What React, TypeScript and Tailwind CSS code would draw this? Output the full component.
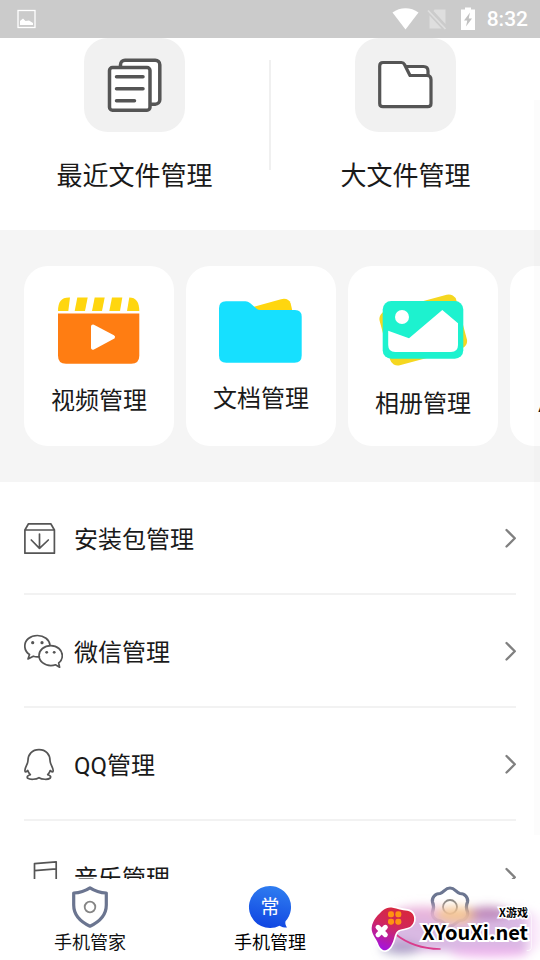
import React, { useState } from 'react';
import { clsx } from 'clsx';

interface IconItem {
  id: string;
  label: string;
  icon: React.ReactNode;
}

const RecentIcon = () => (
  <svg className="w-[55px] h-[54px]" viewBox="0 0 55 54" fill="#fff" stroke="#555" strokeWidth="3.5" strokeLinecap="round" strokeLinejoin="round">
    <rect x="13.5" y="2.2" width="39.3" height="44" rx="4.5" />
    <rect x="2.5" y="9.6" width="40.5" height="42.6" rx="3" />
    <path d="M9.5 18.7H36M9.5 30.7H36M9.5 42.7H27.5" />
  </svg>
);

const BigFileIcon = () => (
  <svg className="w-[55px] h-[54px]" viewBox="0 0 55 54" fill="#fff" stroke="#555" strokeWidth="3.2" strokeLinecap="round" strokeLinejoin="round">
    <path d="M27 8.5H45.5Q50 8.5 50 13V18H31Z" />
    <path d="M5 4.5H23.5Q25.5 4.5 26.5 6.5L32 17.5H49Q53 17.5 53 21.5V45.5Q53 48.7 49.8 48.7H5Q1.7 48.7 1.7 45.5V8Q1.7 4.5 5 4.5Z" />
  </svg>
);

const VideoIcon = () => (
  <svg className="w-24 h-[72px] shrink-0" viewBox="0 0 96 72">
    <g fill="#ffd60f">
      <path d="M7 17C7 8 10 3.4 18 3.4H19L17.3 17Z" />
      <path d="M26.3 3.4H36.7L34 17H23.7Z" />
      <path d="M43.7 3.4H53.7L51 17H41Z" />
      <path d="M61 3.4H71.3L69 17H58.3Z" />
      <path d="M78.3 3.4C85 3.4 88.3 8 88.3 17H76Z" />
    </g>
    <path fill="#ff7d12" d="M7 19.5H88.3V61.7Q88.3 69.7 80.3 69.7H15Q7 69.7 7 61.7Z" />
    <path fill="#fff" stroke="#fff" strokeWidth="4" strokeLinejoin="round" d="M42 32.5L62 43L42 53.7Z" />
  </svg>
);

const DocIcon = () => (
  <svg className="w-24 h-[70px] shrink-0" viewBox="0 0 96 70">
    <path fill="#ffd60f" d="M40 13L68 5.2Q75.5 3.6 77.7 9.5L79.8 19H44Z" />
    <path fill="#16e0ff" d="M13 7.3H32.5Q35 7.3 37 9L44 15Q45.3 16 47 16H82Q88.7 16 88.7 22.7V61.5Q88.7 68.7 81.5 68.7H13.2Q6 68.7 6 61.5V14.3Q6 7.3 13 7.3Z" />
  </svg>
);

const AlbumIcon = () => (
  <svg className="w-24 h-[75px] shrink-0" viewBox="0 0 96 75">
    <rect x="8.5" y="8" width="79.5" height="56" rx="8" fill="#f5d720" transform="rotate(-15 48.2 36)" />
    <rect x="7.7" y="7" width="80.6" height="57.7" rx="8.5" fill="#1df2cf" />
    <path fill="#fff" d="M13.2 36.7L34 44.3L67.3 16L83 29.3V51Q83 58 76 58H20.2Q13.2 58 13.2 51Z" />
    <circle cx="27" cy="23" r="7" fill="#fff" />
  </svg>
);

const lineIcon = {
  className: 'w-[39px] h-[39px] shrink-0',
  viewBox: '0 0 39 39',
  fill: 'none',
  stroke: '#555',
  strokeWidth: 1.7,
  strokeLinecap: 'round' as const,
  strokeLinejoin: 'round' as const,
};

const PackageIcon = () => (
  <svg {...lineIcon}>
    <path d="M0.9 12V35.2H30.4V12ZM0.9 12L4.5 5.8H26.8L30.4 12" />
    <path d="M15.5 16V30.3M7.3 22L15.5 30.3L24.3 22" />
  </svg>
);

const WechatIcon = () => (
  <svg {...lineIcon}>
    <path d="M26 14.3C25.5 8.5 20 4.5 13.4 4.5C6.3 4.5 0.8 9 0.8 15C0.8 18.8 2.5 21.5 5.5 23.5L4 28L9.3 25.2C11 25.7 13 26 15.4 25.6" />
    <path d="M26.8 14.6C20.3 14.6 15 19 15 24.5C15 30.2 20.3 34.6 26.8 34.6C28.5 34.6 30.2 34.3 31.5 33.8L35.6 36.2L34.7 32C37 30.2 38.3 27.5 38.3 24.5C38.3 19 33.2 14.6 26.8 14.6Z" />
    <g fill="#555" stroke="none">
      <circle cx="8.7" cy="11.7" r="1.6" />
      <circle cx="18" cy="11.7" r="1.6" />
      <circle cx="22.7" cy="21.3" r="1.4" />
      <circle cx="30.2" cy="21.3" r="1.4" />
    </g>
  </svg>
);

const QQIcon = () => (
  <svg {...lineIcon}>
    <path d="M15 5.7C8 5.7 3.9 10.5 3.9 17C3.9 20 1 23 0.9 26.5C0.9 28.5 1.5 28.5 3.8 26.5C4.3 28.5 5 29.5 6.3 30.7C3.5 31.5 2.5 33 3.8 34.3C6 35.8 12 35.6 15 33.7C18 35.6 24 35.8 26 34.3C27.3 33 26.5 31.5 23.7 30.7C25 29.5 25.7 28.5 26.2 26.5C28.5 28.5 29.2 28.5 29.2 26.5C29 23 26.1 20 26.1 17C26.1 10.5 22 5.7 15 5.7Z" />
  </svg>
);

const MusicIcon = () => (
  <svg {...lineIcon}>
    <path d="M10.5 31V6.6L32.2 4.8V28M10.5 13.7L32.2 11.9" />
    <circle cx="6.5" cy="31" r="4" />
    <circle cx="28.2" cy="28" r="4" />
  </svg>
);

const ChevronIcon = () => (
  <svg className="w-3 h-5 shrink-0" viewBox="0 0 12 20" fill="none" stroke="#808080" strokeWidth="2.3" strokeLinecap="round" strokeLinejoin="round">
    <path d="M2.5 2L10.8 10.3L2.5 18.5" />
  </svg>
);

const ShieldIcon = () => (
  <svg className="w-11 h-11" viewBox="0 0 44 44" fill="none" stroke="#6b7590" strokeWidth="3.2" strokeLinejoin="round">
    <path d="M22 2.8C17 6 12 7.6 5.7 8V20C5.7 30 13 37 22 41.2C31 37 38.3 30 38.3 20V8C32 7.6 27 6 22 2.8Z" />
    <circle cx="22" cy="22" r="5.3" stroke="#858585" strokeWidth="1.8" />
  </svg>
);

const BubbleIcon = () => (
  <svg className="w-11 h-11" viewBox="0 0 44 44">
    <defs>
      <linearGradient id="bubble" x1="0.6" y1="0" x2="0.4" y2="1">
        <stop offset="0" stopColor="#2f7df0" />
        <stop offset="1" stopColor="#1045e2" />
      </linearGradient>
    </defs>
    <path fill="url(#bubble)" d="M22 1A21 21 0 0 1 37.5 36.2C37 38.5 37.5 40.5 39 42.5C36 42.5 33.5 42 31.5 40.7A21 21 0 1 1 22 1Z" />
    <text x="22" y="29" textAnchor="middle" fill="#fff" fontSize="19" fontFamily="Noto Sans CJK SC, sans-serif">常</text>
  </svg>
);

const FlowerIcon = () => (
  <svg className="w-11 h-11" viewBox="0 0 44 44" fill="none" stroke="#6b7590" strokeWidth="3.2" strokeLinejoin="round">
    <path d="M22 3C27 3 28 7.5 32 8.5C37 8.5 40.5 13 39.5 17C38 20.5 38 23.5 39.5 27C40.5 31 37 35.5 32 35.5C28 36.5 27 41 22 41C17 41 16 36.5 12 35.5C7 35.5 3.5 31 4.5 27C6 23.5 6 20.5 4.5 17C3.5 13 7 8.5 12 8.5C16 7.5 17 3 22 3Z" />
    <circle cx="22" cy="22" r="7" stroke="#858585" strokeWidth="1.8" />
  </svg>
);

const topItems: IconItem[] = [
  { id: 'recent', label: '最近文件管理', icon: <RecentIcon /> },
  { id: 'big', label: '大文件管理', icon: <BigFileIcon /> },
];

const cards: IconItem[] = [
  { id: 'video', label: '视频管理', icon: <VideoIcon /> },
  { id: 'doc', label: '文档管理', icon: <DocIcon /> },
  { id: 'album', label: '相册管理', icon: <AlbumIcon /> },
  { id: 'app', label: 'APP管理', icon: <span className="h-[75px] shrink-0" /> },
];

const rows: IconItem[] = [
  { id: 'package', label: '安装包管理', icon: <PackageIcon /> },
  { id: 'wechat', label: '微信管理', icon: <WechatIcon /> },
  { id: 'qq', label: 'QQ管理', icon: <QQIcon /> },
  { id: 'music', label: '音乐管理', icon: <MusicIcon /> },
];

const tabs: IconItem[] = [
  { id: 'guard', label: '手机管家', icon: <ShieldIcon /> },
  { id: 'manage', label: '手机管理', icon: <BubbleIcon /> },
  { id: 'settings', label: '', icon: <FlowerIcon /> },
];

const StatusBar: React.FC = () => (
  <header className="flex h-[38px] shrink-0 items-center bg-[#cbcbcb] pl-[17px] pr-3 text-white">
    <svg className="w-[19px] h-5" viewBox="0 0 19 20" fill="none">
      <rect x="1" y="1.5" width="17" height="17" stroke="#fff" strokeWidth="1.3" />
      <path fill="#fff" d="M3 16V12L6 9.5L8.5 12L12 11.5L16 14V16Z" />
    </svg>
    <div className="ml-auto flex items-center">
      <svg className="w-[27px] h-6" viewBox="0 0 27 24" fill="#fff">
        <path d="M0.5 5.500C8 -0.3 19 -0.3 26.5 5.500L13.5 22.500Z" />
      </svg>
      <svg className="ml-2 w-5 h-6" viewBox="0 0 20 24">
        <path fill="#dedede" d="M7.5 2.5H18.5V17L6.5 4ZM2.5 8.500L14.500 21.500H2.500Z" />
        <path stroke="#dedede" strokeWidth="1.8" d="M1 3.500L18.500 22" />
      </svg>
      <svg className="ml-[13px] w-4 h-6" viewBox="0 0 16 24">
        <path fill="#fff" d="M5 0.5H11V2.5H15V23H1V2.5H5Z" />
        <path fill="#c2c2c2" d="M10 5.5L4 13.5H7.3L6 19.5L12 11.5H8.7Z" />
      </svg>
      <span className="pl-[11px] text-[21px] leading-6 font-medium">8:32</span>
    </div>
  </header>
);

const Watermark: React.FC = () => (
  <div className="pointer-events-none absolute right-0 bottom-0 h-[100px] w-[180px] overflow-hidden">
    <svg className="absolute inset-0 h-full w-full" viewBox="0 0 540 300">
      <defs>
        <filter id="haze" x="-30%" y="-60%" width="160%" height="220%">
          <feGaussianBlur stdDeviation="15" />
        </filter>
        <linearGradient id="pad" x1="0.7" y1="0" x2="0.3" y2="1">
          <stop offset="0" stopColor="#d8283c" />
          <stop offset="0.45" stopColor="#d0265c" />
          <stop offset="1" stopColor="#a414e0" />
        </linearGradient>
      </defs>
      <g filter="url(#haze)">
        <rect x="90" y="150" width="420" height="125" rx="30" fill="#cfa8dc" opacity="0.8" />
        <ellipse cx="190" cy="160" rx="90" ry="24" fill="#ecb0d8" opacity="0.7" />
        <ellipse cx="290" cy="165" rx="65" ry="26" fill="#f6c690" opacity="0.9" />
        <ellipse cx="385" cy="158" rx="60" ry="20" fill="#a8609c" opacity="0.6" />
        <ellipse cx="120" cy="265" rx="60" ry="20" fill="#9490b8" opacity="0.6" />
        <ellipse cx="390" cy="278" rx="120" ry="16" fill="#f0a8ec" opacity="0.7" />
        <ellipse cx="520" cy="215" rx="24" ry="60" fill="#fae4fa" opacity="0.9" />
      </g>
      <path d="M470 152H495Q514 152 514 172V262Q514 272 500 272" fill="none" stroke="#fff" strokeWidth="3" opacity="0.7" />
      <path d="M106 222Q160 266 240 267" fill="none" stroke="#d93c8c" strokeWidth="5" strokeLinecap="round" />
      <path
        d="M98 143C112 146 125 150 142 152C157 154 165 168 162 182C159 198 148 203 132 206C112 209 108 214 103 232C98 252 90 268 76 271C66 272 58 262 54 250C49 236 34 222 35 204C37 180 56 162 70 150C78 143 88 141 98 143Z"
        fill="url(#pad)"
        stroke="#fff"
        strokeWidth="10"
        paintOrder="stroke"
      />
      <g fill="#ff9312">
        <rect x="84" y="154" width="18" height="18" rx="7" />
        <rect x="106" y="154" width="18" height="18" rx="7" />
        <rect x="84" y="176" width="18" height="18" rx="7" />
        <rect x="106" y="176" width="18" height="18" rx="7" />
      </g>
      <path d="M54 202L76 224M76 202L54 224" stroke="#fff" strokeWidth="15" strokeLinecap="round" />
    </svg>
    <div className="absolute right-3 bottom-[18px] flex flex-col items-end font-bold text-black [paint-order:stroke] font-['Noto_Sans_CJK_SC',sans-serif]">
      <span className="text-[11px] leading-4 [-webkit-text-stroke:3px_#fff]">X游戏</span>
      <span className="mt-0.5 text-xl leading-5 [-webkit-text-stroke:4px_#fff]">XYouXi.net</span>
    </div>
  </div>
);

const App: React.FC = () => {
  const [activeTab, setActiveTab] = useState('manage');

  return (
    <div className="relative flex h-screen flex-col overflow-hidden bg-white text-[#1a1a1a] font-[Roboto,'Noto_Sans_CJK_SC',sans-serif]">
      <StatusBar />

      <main className="relative min-h-0 flex-1 overflow-hidden">
        {/* Quick entries */}
        <section className="flex h-48">
          {topItems.map((item, index) => (
            <React.Fragment key={item.id}>
              {index > 0 && <div className="mt-[22px] h-[110px] w-0.5 bg-[#f0f0f0]" />}
              <button className="flex flex-1 flex-col items-center">
                <span className="flex h-[94px] w-[101px] items-center justify-center rounded-3xl bg-[#f1f1f1]">
                  {item.icon}
                </span>
                <span className="mt-6 text-[26px] leading-10">{item.label}</span>
              </button>
            </React.Fragment>
          ))}
        </section>

        {/* Category cards */}
        <section className="flex gap-3 overflow-hidden bg-[#f5f5f5] py-9 pl-6">
          {cards.map((card) => (
            <button
              key={card.id}
              className="flex h-[180px] w-[150px] shrink-0 flex-col items-center rounded-3xl bg-white pt-7"
            >
              {card.icon}
              <span className="mt-[17px] text-2xl leading-9">{card.label}</span>
            </button>
          ))}
        </section>

        {/* File type list */}
        <ul className="px-6">
          {rows.map((row) => (
            <li key={row.id} className="h-[113px] border-b-2 border-[#f2f2f2]">
              <button className="flex h-full w-full items-center text-left">
                {row.icon}
                <span className="ml-[11px] flex-1 pt-1 text-2xl leading-9">{row.label}</span>
                <ChevronIcon />
              </button>
            </li>
          ))}
        </ul>

        <div className="absolute top-[62px] right-0 h-[735px] w-1.5 bg-black/1" />
      </main>

      <nav className="flex h-[81px] shrink-0 bg-white">
        {tabs.map((tab) => (
          <button
            key={tab.id}
            onClick={() => setActiveTab(tab.id)}
            aria-pressed={activeTab === tab.id}
            aria-label={tab.label || '设置'}
            className={clsx('flex flex-1 flex-col items-center pt-1.5', activeTab === tab.id ? 'text-black' : 'text-[#111]')}
          >
            {tab.icon}
            <span className="text-lg leading-7">{tab.label}</span>
          </button>
        ))}
      </nav>

      <Watermark />
    </div>
  );
};

export default App;
